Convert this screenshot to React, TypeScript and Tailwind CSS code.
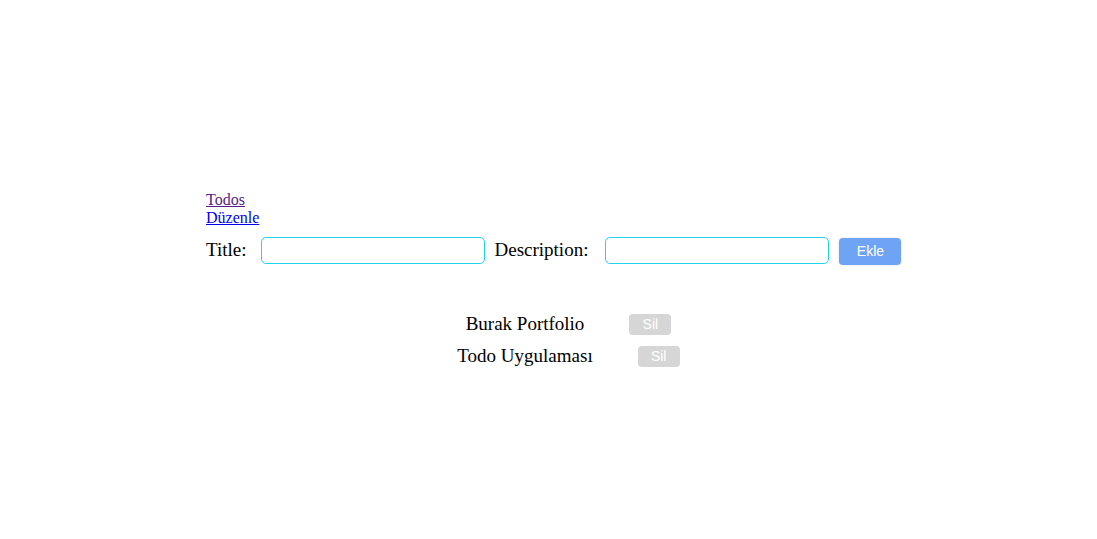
import { useState } from "react";

type Todo = { id: number; title: string; description: string };

export default function App() {
  const [title, setTitle] = useState("");
  const [description, setDescription] = useState("");
  const [todos, setTodos] = useState<Todo[]>([
    { id: 1, title: "Burak Portfolio", description: "" },
    { id: 2, title: "Todo Uygulaması", description: "" },
  ]);

  const addTodo = () => {
    if (!title.trim()) return;
    setTodos([...todos, { id: Date.now(), title, description }]);
    setTitle("");
    setDescription("");
  };

  return (
    <div className="min-h-screen bg-white font-['Liberation_Serif',serif] text-black">
      <div className="mx-auto w-[685px] pt-[191px]">
        <nav className="flex flex-col items-start text-[16px] leading-[18px]">
          <a href="#" className="text-[#551a8b] underline">Todos</a>
          <a href="#" className="text-[#0000ee] underline">Düzenle</a>
        </nav>

        <div className="mt-[9px] flex items-center text-[19px]">
          <label className="mr-[14px] shrink-0">Title:</label>
          <input
            type="text"
            value={title}
            onChange={(e) => setTitle(e.target.value)}
            className="h-[27px] w-[224px] shrink-0 rounded-[5px] border border-[#22d3ee] px-2 outline-none"
          />
          <label className="ml-[10px] mr-[17px] shrink-0">Description:</label>
          <input
            type="text"
            value={description}
            onChange={(e) => setDescription(e.target.value)}
            className="h-[27px] w-[224px] shrink-0 rounded-[5px] border border-[#22d3ee] px-2 outline-none"
          />
          <button
            onClick={addTodo}
            className="ml-[10px] h-[27px] w-[62px] shrink-0 translate-y-[1px] rounded-[4px] bg-[#6fa4f5] font-['Liberation_Sans',sans-serif] text-[14px] text-white shadow-[0_0_2px_rgba(0,0,0,0.15)]"
          >
            Ekle
          </button>
        </div>

        <ul className="mt-[44px] pl-[40px] text-[19px]">
          {todos.map((todo) => (
            <li key={todo.id} className="flex h-[32px] items-center justify-center">
              <span>{todo.title}</span>
              <button
                onClick={() => setTodos(todos.filter((t) => t.id !== todo.id))}
                className="ml-[45px] h-[21px] w-[42px] rounded-[4px] bg-[#d6d6d6] font-['Liberation_Sans',sans-serif] text-[14px] text-white"
              >
                Sil
              </button>
            </li>
          ))}
        </ul>
      </div>
    </div>
  );
}
